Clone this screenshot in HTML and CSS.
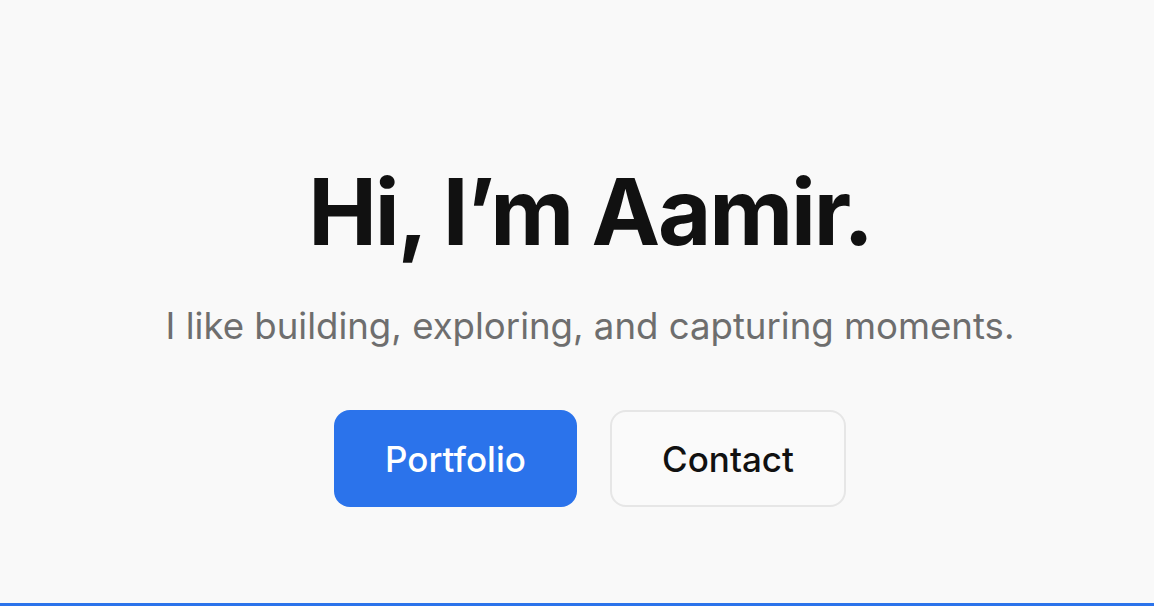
FILE: index.html
```html
<!DOCTYPE html>
<html lang="en">
<head>
<meta charset="utf-8">
<title>Aamir</title>
<link rel="stylesheet" href="styles.css">
</head>
<body>
<main class="page">
  <section class="hero">
    <h1 class="title">Hi, I’m Aamir.</h1>
    <p class="subtitle">I like building, exploring, and capturing moments.</p>
    <div class="actions">
      <a class="btn btn-primary" href="#">Portfolio</a>
      <a class="btn btn-secondary" href="#">Contact</a>
    </div>
  </section>
</main>
</body>
</html>
```

FILE: styles.css
```css
html, body {
  margin: 0;
  padding: 0;
  height: 100%;
}
body {
  background: #f9f9f9;
  font-family: Inter, "Noto Sans", sans-serif;
  color: #111111;
  overflow: hidden;
}
.page {
  box-sizing: border-box;
  height: 606px;
  border-bottom: 3px solid #2b73eb;
  display: flex;
  justify-content: center;
  padding-left: 26px;
}
.hero {
  display: flex;
  flex-direction: column;
  align-items: center;
  padding-top: 157px;
}
.title {
  margin: 0;
  font-size: 92px;
  font-weight: 700;
  letter-spacing: -2.2px;
  line-height: 110px;
  color: #111111;
}
.subtitle {
  margin: 37px 0 0;
  font-size: 36.6px;
  font-weight: 400;
  color: #6e6e6e;
  line-height: 44px;
}
.actions {
  display: flex;
  gap: 33px;
  margin-top: 62px;
}
.btn {
  box-sizing: border-box;
  height: 97px;
  display: flex;
  align-items: center;
  justify-content: center;
  text-decoration: none;
  font-size: 35px;
  font-weight: 500;
  border-radius: 16px;
}
.btn-primary {
  width: 243px;
  background: #2b73eb;
  color: #ffffff;
}
.btn-secondary {
  width: 236px;
  background: #fafafa;
  color: #111111;
  border: 2px solid #e6e6e6;
}
```
